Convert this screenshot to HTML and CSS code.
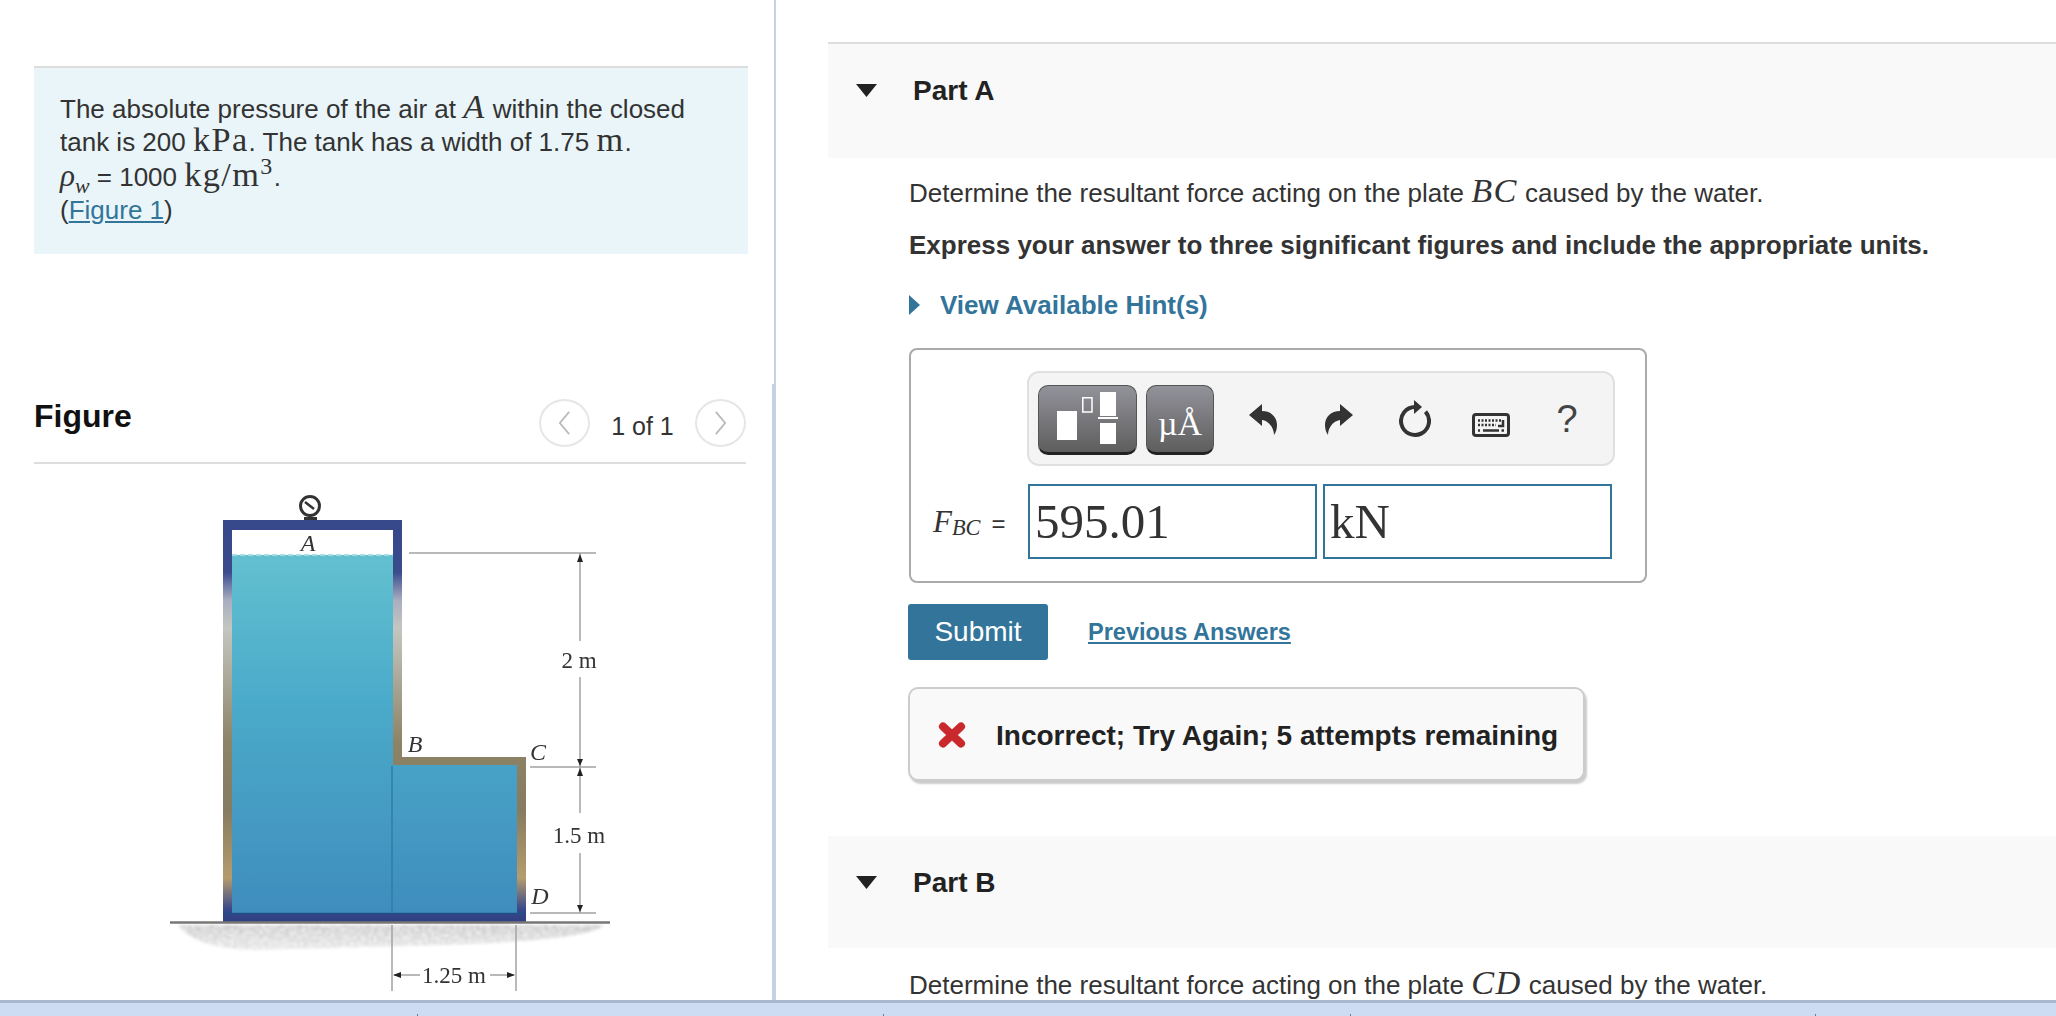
FILE: index.html
```html
<!DOCTYPE html>
<html lang="en">
<head>
<meta charset="utf-8">
<title>Part A</title>
<link rel="stylesheet" href="styles.css">
</head>
<body>
<div class="page">
  <main class="panes">
    <aside class="left">
      <div class="info">
        <span class="line l1">The absolute pressure of the air at <i class="math">A</i> within the closed</span>
        <span class="line l2">tank is 200 <span class="math">kPa</span>. The tank has a width of 1.75 <span class="math">m</span>.</span>
        <span class="line l3"><i class="math rho">ρ<sub>w</sub></i> = 1000 <span class="math">kg/m<sup>3</sup></span>.</span>
        <span class="line l4">(<a class="link" href="#fig">Figure 1</a>)</span>
      </div>
      <div class="fig-head" id="fig">
        <h2 class="fig-title">Figure</h2>
        <div class="pager">
          <span class="circle"><svg class="chev" viewBox="0 0 14 28"><path d="M12 2 2 14l10 12"/></svg></span>
          <span class="count">1 of 1</span>
          <span class="circle"><svg class="chev" viewBox="0 0 14 28"><path d="M2 2l10 12L2 26"/></svg></span>
        </div>
      </div>
      <svg class="figure" viewBox="0 470 772 530" width="772" height="530">
        <defs>
          <linearGradient id="water" gradientUnits="userSpaceOnUse" x1="0" y1="555" x2="0" y2="912">
            <stop offset="0" stop-color="#63c0d0"/><stop offset=".4" stop-color="#4babca"/><stop offset="1" stop-color="#3f8dbd"/>
          </linearGradient>
          <linearGradient id="wall" gradientUnits="userSpaceOnUse" x1="0" y1="520" x2="0" y2="922">
            <stop offset="0" stop-color="#36478a"/><stop offset=".13" stop-color="#3b4c8d"/><stop offset=".2" stop-color="#a9aec0"/><stop offset=".27" stop-color="#c3c6c0"/><stop offset=".55" stop-color="#8d8468"/><stop offset=".72" stop-color="#857b60"/><stop offset=".89" stop-color="#b59c6d"/><stop offset=".97" stop-color="#36478a"/><stop offset="1" stop-color="#2f3f80"/>
          </linearGradient>
          <linearGradient id="shade" gradientUnits="userSpaceOnUse" x1="0" y1="924" x2="0" y2="952">
            <stop offset="0" stop-color="#bdbdbd"/><stop offset="1" stop-color="#e6e6e6"/>
          </linearGradient>
          <filter id="speckle" x="-5%" y="-30%" width="110%" height="160%">
            <feTurbulence type="fractalNoise" baseFrequency=".35" numOctaves="2" seed="4" result="n"/>
            <feColorMatrix in="n" type="matrix" values="0 0 0 0 1  0 0 0 0 1  0 0 0 0 1  0 0 1.800 0 -.55" result="w"/>
            <feComposite in="w" in2="SourceAlpha" operator="in" result="dots"/>
            <feMerge result="m"><feMergeNode in="SourceGraphic"/><feMergeNode in="dots"/></feMerge>
            <feGaussianBlur in="m" stdDeviation="1.500"/>
          </filter>
        </defs>
        <path fill="url(#shade)" filter="url(#speckle)" d="M178 925H604C590 938 520 942 440 945L250 950C212 948 190 940 178 925Z"/>
        <path fill="url(#wall)" d="M223 520H402V757H526V922H223Z"/>
        <path fill="#fff" d="M232 530H393V556H232Z"/>
        <path fill="url(#water)" d="M232 555H393V765H517V913H232Z"/>
        <path class="wave" d="M232 555H393"/>
        <path class="seam" d="M392 766V912"/>
        <path class="ground" d="M170 922.500H610"/>
        <path class="floor" d="M223 913.500H526"/>
        <path class="dim" d="M409 553H596M530 767H596M530 913H596M580 553V641M580 677V813M580 853V913M392 925V991M516 925V991M394 975H420M490 975H514"/>
        <path class="arrow" d="M580 554l-3 8h6ZM580 766l-3-7h6ZM580 768l-3 8h6ZM580 912l-3-7h6ZM393 975l8-3v6ZM515 975l-8-3v6Z"/>
        <circle class="gauge" cx="310" cy="506" r="9.500"/>
        <path class="gauge-needle" d="M305 502l9 7M310 515v3"/>
        <path class="gauge-base" d="M304 518.500H317"/>
        <text class="label" x="308" y="551">A</text>
        <text class="label" x="415" y="752">B</text>
        <text class="label" x="538" y="760">C</text>
        <text class="label" x="540" y="904">D</text>
        <text class="dim-text" x="579" y="668">2 m</text>
        <text class="dim-text" x="579" y="843">1.5 m</text>
        <text class="dim-text" x="454" y="983">1.25 m</text>
      </svg>
    </aside>
    <div class="splitter"></div>
    <section class="right">
      <article class="part">
        <header class="part-head topline">
          <svg class="caret" viewBox="0 0 21 13"><path d="M0 0H21L10.500 13Z"/></svg>
          <h3 class="part-title">Part A</h3>
        </header>
        <div class="part-body">
          <p class="prompt">Determine the resultant force acting on the plate <i class="math">BC</i> caused by the water.</p>
          <p class="instr">Express your answer to three significant figures and include the appropriate units.</p>
          <div class="hint"><svg class="hint-caret" viewBox="0 0 11 20"><path d="M0 0L11 10 0 20Z"/></svg><span>View Available Hint(s)</span></div>
          <div class="answer">
            <div class="toolbar">
              <button class="tbtn tbtn-wide" type="button">
                <svg class="tmpl" viewBox="0 0 62 54" width="62" height="54">
                  <path fill="#fff" d="M0 19H20V48H0Z"/>
                  <path fill="none" stroke="#fff" stroke-width="1.500" d="M25.800 5.800H35V20H25.800Z"/>
                  <path fill="#fff" d="M43 0H59V24H43ZM41 25H61V27H41ZM43 31H59V52H43Z"/>
                </svg>
              </button>
              <button class="tbtn tbtn-unit" type="button">µÅ</button>
              <span class="tool"><svg viewBox="0 0 28 31" width="28" height="31"><path class="ico" d="M0 11 13 0V7C22 7 28 13 28 21 28 25 27 28 25 31 25 24 20 17 13 16V22Z"/></svg></span>
              <span class="tool"><svg viewBox="0 0 28 31" width="28" height="31"><path class="ico" d="M28 11 15 0V7C6 7 0 13 0 21 0 25 1 28 3 31 3 24 8 17 15 16V22Z"/></svg></span>
              <span class="tool"><svg viewBox="0 0 32 38" width="32" height="38"><path class="ring" d="M16 7A14 14 0 1 0 26.500 11.700"/><path class="ico" d="M15 0 23 7 15 14Z"/></svg></span>
              <span class="tool tool-kbd"><svg viewBox="0 0 38 24" width="38" height="24"><rect class="kbd" x="1.500" y="1.500" width="35" height="21" rx="2.500"/><path class="keys" d="M6 7.500H30M6 12H24"/><path class="keys-solid" d="M31 7V13H26M6 17.500H8M11 17.500H27M29.500 17.500H32"/></svg></span>
              <span class="tool tool-help">?</span>
            </div>
            <div class="answer-row">
              <span class="eq-label"><i class="eq-f">F<sub>BC</sub></i><span class="eq-sign">=</span></span>
              <div class="field">595.01</div>
              <div class="field">kN</div>
            </div>
          </div>
          <div class="actions">
            <button class="submit" type="button">Submit</button>
            <a class="prev" href="#prev">Previous Answers</a>
          </div>
          <div class="feedback">
            <svg class="cross" viewBox="0 0 28 26" width="28" height="26"><path d="M5 4.500 23 21.500M23 4.500 5 21.500"/></svg>
            <span class="feedback-text">Incorrect; Try Again; 5 attempts remaining</span>
          </div>
        </div>
      </article>
      <article class="part part-b">
        <header class="part-head">
          <svg class="caret" viewBox="0 0 21 13"><path d="M0 0H21L10.500 13Z"/></svg>
          <h3 class="part-title">Part B</h3>
        </header>
        <div class="part-body">
          <p class="prompt">Determine the resultant force acting on the plate <i class="math">CD</i> caused by the water.</p>
        </div>
      </article>
    </section>
  </main>
  <footer class="dock">
    <span class="dock-cell"></span><span class="dock-cell"></span><span class="dock-cell"></span><span class="dock-cell"></span>
  </footer>
</div>
</body>
</html>
```
FILE: styles.css
```css
* { box-sizing: border-box; }
html, body { margin: 0; height: 100%; overflow: hidden; background: #fff; }
body { font-family: "Liberation Sans", Arial, sans-serif; font-size: 26px; color: #333; }
.page { display: flex; flex-direction: column; height: 1016px; }
.panes { flex: 1; display: flex; min-height: 0; overflow: hidden; }

.left { width: 772px; flex: none; padding-top: 66px; }
.info { margin: 0 24px 0 34px; height: 188px; padding: 25px 0 0 26px; background: #e9f5f8; border-top: 2px solid #ddd; }
.line { display: block; white-space: nowrap; }
.l1 { height: 33px; line-height: 33px; }
.l2 { height: 34px; line-height: 33px; }
.l3 { height: 34px; line-height: 34px; }
.l4 { height: 33px; line-height: 33px; }
.math { font-family: "Liberation Serif", serif; font-size: 1.32em; letter-spacing: .04em; line-height: 0; }
.rho { letter-spacing: 0; font-size: 1.2em; }
sub, sup { font-size: .7em; line-height: 0; }
.link { color: #33759a; }

.fig-head { margin: 145px 26px 0 34px; height: 65px; display: flex; justify-content: space-between; align-items: flex-start; border-bottom: 2px solid #ddd; }
.fig-title { margin: 0; font-size: 32px; line-height: 34px; color: #111; font-weight: bold; }
.pager { display: flex; align-items: center; }
.circle { width: 51px; height: 48px; border: 2px solid #e6e6e6; border-radius: 50%; display: flex; align-items: center; justify-content: center; }
.chev { width: 13px; height: 26px; fill: none; stroke: #bbb; stroke-width: 2; }
.count { width: 105px; text-align: center; padding-top: 6px; font-size: 25px; }
.figure { display: block; margin-top: 6px; filter: blur(.7px); }
.wave { stroke: #a9dde6; stroke-width: 2; stroke-dasharray: 5 3; fill: none; }
.seam { stroke: #2f7ea3; stroke-width: 1.500; fill: none; }
.ground { stroke: #777; stroke-width: 2.500; fill: none; }
.floor { stroke: #1f4f86; stroke-width: 1.500; fill: none; }
.dim { stroke: #a2a2a2; stroke-width: 1.500; fill: none; }
.arrow { fill: #222; }
.gauge { fill: #fff; stroke: #333; stroke-width: 3; }
.gauge-needle { stroke: #333; stroke-width: 2.500; fill: none; }
.gauge-base { stroke: #333; stroke-width: 3; fill: none; }
.label { font-family: "Liberation Serif", serif; font-style: italic; font-size: 24px; fill: #333; text-anchor: middle; }
.dim-text { font-family: "Liberation Serif", serif; font-size: 23px; fill: #333; text-anchor: middle; }

.splitter { width: 4px; flex: none; background: linear-gradient(#fff, #fff) 0 0/2px 384px no-repeat, #c5d2e6; }

.right { flex: 1; min-width: 0; padding: 42px 0 0 52px; }
.part-head { height: 116px; padding: 31px 0 0 28px; display: flex; align-items: flex-start; background: #f9f9f9; }
.topline { border-top: 2px solid #ddd; }
.caret { width: 21px; height: 13px; flex: none; margin-top: 9px; margin-right: 36px; fill: #222; }
.part-title { margin: 0; font-size: 28px; line-height: 32px; font-weight: bold; color: #222; }
.part-body { padding-left: 81px; }
.prompt { margin: 19px 0 0; line-height: 32px; white-space: nowrap; }
.instr { margin: 20px 0 0; line-height: 32px; font-weight: bold; white-space: nowrap; }
.hint { margin-top: 28px; height: 32px; display: flex; align-items: center; gap: 20px; font-weight: bold; color: #33759a; }
.hint-caret { width: 11px; height: 20px; fill: #33759a; flex: none; }

.answer { margin-top: 27px; width: 738px; height: 235px; padding: 21px 0 0 22px; border: 2px solid #aaa; border-radius: 8px; }
.toolbar { margin-left: 94px; width: 588px; height: 95px; padding: 12px 0 0 9px; display: flex; align-items: flex-start; gap: 0; background: #f4f4f4; border: 2px solid #e0e0e0; border-radius: 12px; }
.tbtn { height: 70px; padding: 0; display: flex; align-items: center; justify-content: center; border: 1px solid #555; border-bottom: 3px solid #222; border-radius: 10px; background: linear-gradient(#92929a, #5e5e5e); color: #fff; }
.tbtn-wide { width: 99px; margin-right: 9px; }
.tbtn-unit { width: 68px; margin-right: 11px; font-family: "Liberation Serif", serif; font-size: 34px; line-height: 1; padding-top: 10px; }
.tool { width: 76px; height: 68px; display: flex; align-items: center; justify-content: center; }
.tool-kbd svg { margin-top: 11px; }
.ico { fill: #333; }
.ring { fill: none; stroke: #333; stroke-width: 4; }
.kbd { fill: none; stroke: #333; stroke-width: 3; }
.keys { fill: none; stroke: #333; stroke-width: 2.500; stroke-dasharray: 2 1.500; }
.keys-solid { fill: none; stroke: #333; stroke-width: 2.500; }
.tool-help { font-size: 38px; color: #444; }

.answer-row { margin-top: 18px; display: flex; align-items: stretch; gap: 6px; }
.eq-label { width: 89px; align-self: center; white-space: nowrap; font-size: 24px; }
.eq-f { font-family: "Liberation Serif", serif; font-size: 31px; }
.eq-f sub { font-size: .72em; vertical-align: -.12em; }
.eq-sign { margin-left: 11px; }
.field { width: 289px; height: 75px; padding-left: 5px; border: 2px solid #33759a; font-family: "Liberation Serif", serif; font-size: 49px; line-height: 71px; color: #333; background: #fff; }

.actions { margin: 21px 0 0 -1px; display: flex; align-items: center; gap: 40px; }
.submit { width: 140px; height: 56px; padding: 0; border: 0; border-radius: 3px; background: #33759a; color: #fff; font: 28px "Liberation Sans", Arial, sans-serif; }
.prev { font-weight: bold; color: #33759a; font-size: 23.500px; }
.feedback { margin: 27px 0 0 -1px; width: 677px; height: 94px; padding-left: 28px; display: flex; align-items: center; gap: 30px; background: #f9f9f9; border: 2px solid #ccc; border-radius: 10px; box-shadow: 2px 3px 2px #ccc; font-weight: bold; font-size: 28px; color: #222; white-space: nowrap; }
.feedback-text { padding-top: 3px; }
.cross { flex: none; margin-top: 2px; fill: none; stroke: #c9282d; stroke-width: 8; stroke-linecap: round; }

.part-b { margin-top: 55px; }
.part-b .part-head { height: 112px; }
.part-b .prompt { margin-top: 21px; }

.dock { height: 16px; flex: none; padding-left: 0; display: flex; align-items: flex-end; background: #cddcf3; border-top: 3px solid #a9b7d1; }
.dock-cell { height: 2px; width: 465.500px; border-right: 1px solid #777; }
.dock-cell:first-child { width: 418px; }
.dock-cell:nth-child(3) { width: 467px; }
```
